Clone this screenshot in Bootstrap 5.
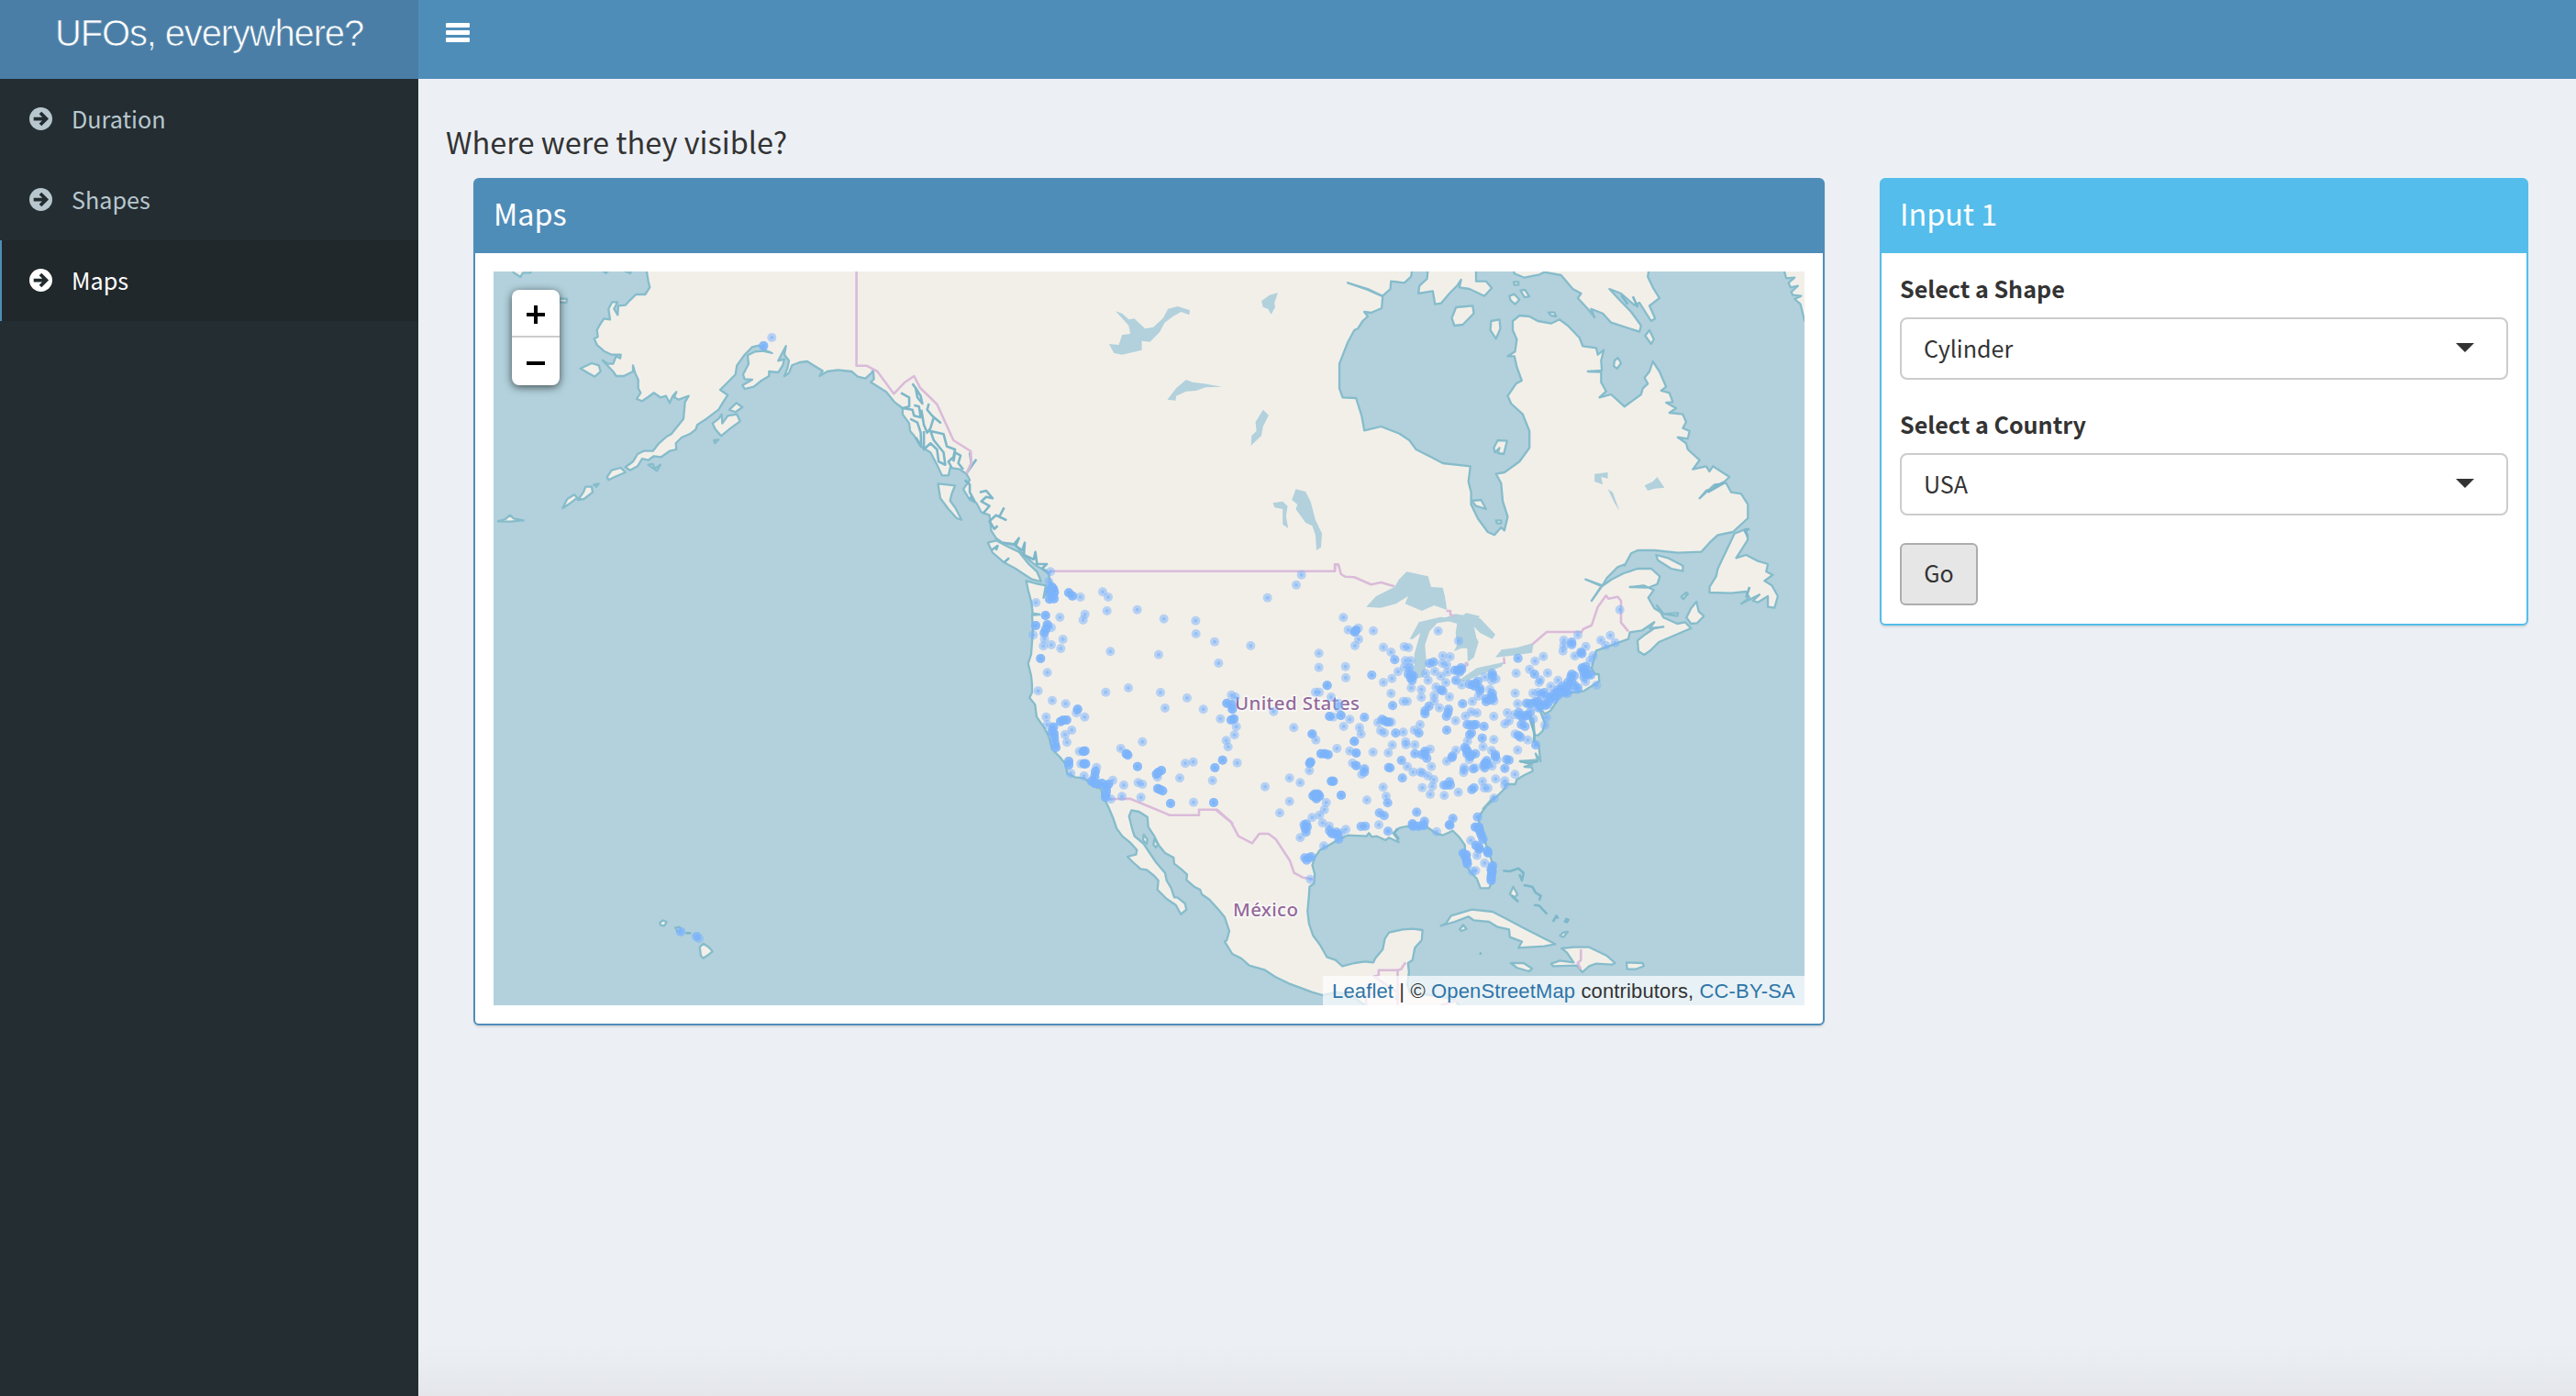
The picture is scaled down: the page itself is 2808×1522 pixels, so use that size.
<!DOCTYPE html>
<html lang="en">
<head>
<meta charset="utf-8">
<title>UFOs, everywhere?</title>
<link rel="stylesheet" href="https://cdn.jsdelivr.net/npm/bootstrap@5.3.0/dist/css/bootstrap.min.css">
<script src="https://cdn.jsdelivr.net/npm/bootstrap@5.3.0/dist/js/bootstrap.bundle.min.js"></script>
<style>
body{background:#ecf0f5;color:#333;font-family:"Noto Sans CJK SC","Noto Sans",sans-serif;font-size:25.1px;line-height:40px;height:1522px;overflow:hidden}
.topbar{height:86px;background:#4f8db9}
.brand{width:456px;height:86px;background:#4a7ea6;color:#fff;font:40px/72px "Liberation Sans",sans-serif;letter-spacing:-1.15px;-webkit-text-stroke:.7px #4a7ea6}
.burger{margin-left:30px;margin-top:24px}
.side{width:456px;background:#242d32;height:1436px}
.side .nav-link{height:88px;padding:0 0 2px 30px;color:#b8c7ce;border-left:2px solid transparent;font-size:25.2px}
.side .nav-link svg{width:25px;height:25px;margin-right:21px}
.side .nav-link.active{background:#20282b;color:#fff;border-left-color:#4f8db9}
.content-area{padding:48px 0 0 30px;background:linear-gradient(#e4e7eb00 96%,#e4e6ea)}
.heading{font-size:32.5px;font-weight:400;line-height:40px;margin:0 0 20px}
.panel{border:2px solid #4f8db9;border-radius:6px;box-shadow:0 2px 2px rgba(0,0,0,.1);background:#fff}
.panel-map{width:1473px;height:924px;margin-left:30px}
.panel-in{width:707px;height:488px;margin-left:60px;border-color:#54bdeb}
.panel-top{height:80px;background:#4f8db9;color:#fff;font-size:32.3px;line-height:73px;padding-left:20px}
.panel-in .panel-top{background:#54bdeb}
.panel-fields{padding:20px}
.mapbox{width:1429px;height:800px;margin:20px;background:#b2d1dc;overflow:hidden}
.mapbox>svg{display:block}
.zoomer{left:20px;top:20px;width:52px;height:104px;background:#fff;border-radius:8px;box-shadow:0 2px 10px rgba(0,0,0,.65)}
.zoomer div{height:52px}
.zoomer div:first-child{border-bottom:2px solid #ccc;padding-top:4px}
.credit{right:0;bottom:0;height:32px;width:525px;background:rgba(255,255,255,.7);font:22px/33px "Liberation Sans",sans-serif;letter-spacing:.14px;white-space:nowrap;padding-left:10px}
.credit a{color:#2e75a8;text-decoration:none}
.field-label{font-weight:700;line-height:37px;display:block;margin-bottom:13px}
.pick{height:68px;border:2px solid #ccc;border-radius:8px;padding:0 35px 2px 24px;margin-bottom:30px;background:#fff}
.tri{border:10px solid transparent;border-top-color:#333;border-bottom:0}
.go{width:85px;height:68px;border:2px solid #adadad;border-radius:6px;background:#e6e6e6;color:#333;font-size:25px;padding:0 0 2px}
</style>
</head>
<body>
<header class="topbar d-flex">
  <div class="brand text-center">UFOs, everywhere?</div>
  <svg class="burger" width="27" height="24" fill="#fff"><rect y="1" width="26" height="5" rx="1"/><rect y="9" width="26" height="5" rx="1"/><rect y="17" width="26" height="5" rx="1"/></svg>
</header>
<div class="d-flex">
  <nav class="side nav flex-column flex-shrink-0">
    <a class="nav-link d-flex align-items-center"><svg viewBox="0 0 24 24"><use href="#arrow"/></svg>Duration</a>
    <a class="nav-link d-flex align-items-center"><svg viewBox="0 0 24 24"><use href="#arrow"/></svg>Shapes</a>
    <a class="nav-link d-flex align-items-center active"><svg viewBox="0 0 24 24"><use href="#arrow"/></svg>Maps</a>
  </nav>
  <main class="content-area flex-grow-1">
    <h3 class="heading">Where were they visible?</h3>
    <div class="d-flex align-items-start">
      <section class="panel panel-map">
        <div class="panel-top">Maps</div>
        <div class="mapbox position-relative">
          <svg id="map" width="1429" height="800" viewBox="538 296 1429 800"></svg>
          <div class="zoomer position-absolute">
            <div class="d-flex align-items-center justify-content-center"><svg width="22" height="22" stroke="#000" stroke-width="4"><path d="M1 11H21M11 1V21"/></svg></div>
            <div class="d-flex align-items-center justify-content-center"><svg width="22" height="22" stroke="#000" stroke-width="4"><path d="M1 13H21"/></svg></div>
          </div>
          <div class="credit position-absolute"><a href="#">Leaflet</a> | © <a href="#">OpenStreetMap</a> contributors, <a href="#">CC-BY-SA</a></div>
        </div>
      </section>
      <section class="panel panel-in">
        <div class="panel-top">Input 1</div>
        <div class="panel-fields">
          <label class="field-label">Select a Shape</label>
          <div class="pick d-flex align-items-center justify-content-between"><span>Cylinder</span><span class="tri"></span></div>
          <label class="field-label">Select a Country</label>
          <div class="pick d-flex align-items-center justify-content-between"><span>USA</span><span class="tri"></span></div>
          <button class="btn go">Go</button>
        </div>
      </section>
    </div>
  </main>
</div>
<svg width="0" height="0" class="position-absolute"><defs><g id="arrow"><circle cx="12" cy="12" r="12" fill="currentColor"/><path d="M4.5 12H17M11.5 5.8 17.7 12l-6.2 6.2" fill="none" stroke="#222b2f" stroke-width="3.6"/></g></defs></svg>
<script>
// Every sheet of the chart has its own origin and scale: [x, y, sx, sy]
const S={A:[530,290,1/3,1/3],B:[900,290,1/2.8,1/3],C:[1400,290,.3635,1/3],D:[1080,600,1/3,1/3],
E:[1480,600,1/3,1/3],F:[1080,860,1/3,1/3],G:[1420,860,.3763,1/3],H:[700,980,1/3,1/3]};
const map=document.getElementById('map');
const pts=(k,s)=>{const n=s.trim().split(/[\s,]+/).map(Number),t=S[k],o=[];for(let i=0;i<n.length;i+=2)o.push([t[0]+n[i]*t[2],t[1]+n[i+1]*t[3]]);return o};
const el=(name,a,text)=>{const e=document.createElementNS('http://www.w3.org/2000/svg',name);for(const k in a)e.setAttribute(k,a[k]);if(text)e.textContent=text;map.appendChild(e)};
const path=(list,closed,attrs)=>{const p=list.flatMap(([k,s])=>pts(k,s));el('path',{d:'M'+p.map(q=>q[0].toFixed(1)+' '+q[1].toFixed(1)).join('L')+(closed?'Z':''),...attrs})};
const LAND={fill:'#f2efe9',stroke:'#86bccb','stroke-width':2.3,'stroke-linejoin':'round'};
const LAKE={fill:'#b2d1dc'};
const COAST={fill:'none',stroke:'#7db7c9','stroke-width':2.6,'stroke-linejoin':'round'};
const BORDER={fill:'none',stroke:'#dabbd9','stroke-width':2.6,'stroke-linejoin':'round'};

// North American mainland, west coast first, then back up the Atlantic side
path([['A','525,0 525,18 530,50 535,70 520,93 490,93 470,112 455,128 432,130 430,160 418,140 430,118 412,118 400,140 405,175 385,172 370,195 362,210 365,232 353,238 362,258 385,278 410,290 440,290 438,302 425,295 415,320 398,320 380,308 415,345 425,360 450,360 480,345 480,325 487,350 497,372 497,400 505,415 492,435 510,442 530,428 548,415 570,430 588,425 600,448 610,425 622,412 615,430 630,437 662,425 650,445 645,500 625,525 605,550 590,558 565,580 545,605 515,605 495,615 480,640 455,658 470,668 495,655 510,630 530,635 548,622 572,625 600,605 622,600 620,580 640,560 665,550 685,535 690,520 720,500 760,470 775,445 790,422 765,405 790,380 815,355 820,325 845,290 870,265 892,260 912,275 935,285 905,278 880,280 855,292 858,320 840,355 845,370 870,372 838,390 845,402 875,395 900,375 925,360 925,345 955,348 970,325 975,305 955,310 965,290 980,262 975,290 990,310 985,335 975,360 990,350 1000,325 1025,315 1050,312 1070,325 1100,343 1090,360 1115,345 1150,340 1195,345 1215,362 1240,368 1260,350 1265,340 1268,370 1258,380'],
['B','185,412 210,445 235,465 235,485 255,515 258,540 270,555 290,590 320,610 340,650 355,685 375,685 380,660 410,665 430,680 440,700 430,715 420,730 440,765 460,775 475,805 500,815 505,865 520,890 540,905 580,912 600,940 625,965 650,985 672,995 682,1005 682,1020 690,1040 665,1085 672,1045 640,1038 612,1030 618,1060 628,1100 632,1135'],
['D','135,205 160,210 135,212 138,260 135,300 132,340 122,370 132,410 135,440 135,465 127,482 145,505 150,545 175,580 190,610 200,650 225,675 245,700 250,730 275,742 305,745 330,765 360,780 370,810'],
['F','385,60 400,95 412,130 430,155 455,175 478,200 475,215 447,222 465,240 490,262 510,265 535,285 548,300 545,330 575,360 605,380 622,410 640,395 635,375 610,355 600,355 590,325 575,300 570,275 540,240 520,210 500,180 470,155 462,130 452,90 460,70 485,75 512,92 515,125 535,155 550,185 570,210 598,225 600,245 622,262 642,280 640,298 665,320 685,330 690,345 715,362 745,395 765,420 780,465 772,495 765,500 790,540 820,555 845,578 895,592 930,615 975,637 1010,650 1050,665 1085,675'],
['G','100,665 140,675 185,712 455,712 440,690 400,680 350,672 310,665 303,640 308,600 305,570 318,560 325,520 345,495 347,462 320,458 290,460 250,470 238,490 232,525 210,555 205,568 180,565 150,570 115,580 95,560 70,550 50,510 30,480 18,440 14,400 18,350 20,320 33,310 35,280 28,250 35,225 50,200 75,185 105,165 130,152 185,155 192,145 200,157 215,155 240,168 250,160 278,175 272,160 262,145 280,128 300,123 360,125 385,145 405,152 435,137 455,160 470,185 470,215 468,240 485,270 505,295 515,325 540,325 550,300 552,250 540,210 525,165 515,125 508,95 520,75 540,45 555,25'],
['E','410,845 440,820 480,780 485,765 515,765 520,750 545,735 572,722 570,710 545,708 570,700 530,690 588,685 582,665 598,690 592,640 580,625 575,590 565,560 560,530 575,560 578,605 590,605 605,590 612,565 600,535 590,510 612,535 630,525 650,495 655,480 700,465 740,460 790,428 788,405 775,405 765,385 775,345 780,328 830,310 885,290 890,268 930,262 970,235 955,255 1000,250 970,255 940,275 915,295 918,330 937,342 960,325 985,300 1090,255 1070,235 1045,240 1000,220 978,180 1000,208 1048,205 1045,215 1000,208 970,190 950,155 968,130 935,115 890,120 950,122 980,110 988,85 960,60 915,60 870,75 830,95 795,120 775,150 765,165 798,118 745,95 800,115 815,90 850,55 875,45'],
['C','1020,980 1040,940 1060,930 1110,930 1180,938 1250,935 1275,905 1300,880 1345,870 1390,825 1390,780 1370,745 1340,740 1325,710 1290,715 1245,760 1265,735 1320,705 1335,690 1300,665 1285,655 1275,672 1265,655 1225,665 1245,635 1210,600 1205,580 1180,560 1210,565 1215,540 1195,530 1205,510 1195,485 1155,480 1175,465 1145,447 1165,445 1155,415 1130,408 1145,395 1125,345 1105,312 1095,345 1080,365 1090,385 1075,400 1070,420 1045,440 1020,460 1000,440 980,420 945,430 965,410 950,380 950,347 910,345 952,342 950,310 958,275 940,290 935,268 895,262 885,235 850,195 825,175 800,188 760,180 735,165 705,162 685,180 685,210 697,240 692,280 670,295 690,295 697,330 712,375 695,385 670,425 680,450 715,485 735,540 735,595 705,640 660,675 635,680 650,710 655,770 670,820 660,865 650,855 630,880 610,870 580,825 560,780 560,740 552,705 558,655 475,645 440,625 395,600 375,570 345,548 290,525 240,538 232,490 215,432 175,430 165,400 165,320 190,250 210,210 220,205 235,180 250,165 240,150 260,153 292,138 295,100 250,78 190,55 250,75 295,98 318,75 320,50 360,55 380,35 385,0']],true,LAND);

// Islands
[['A','78,0 90,22 112,36 120,22 145,22 150,0'],['A','370,10 392,23 405,10'],['A','440,10 470,24 480,10'],
['A','240,106 265,108 262,120 240,118'],['A','308,335 345,318 368,325 374,345 355,362 330,348'],
['A','795,470 818,448 838,462 815,478'],['A','740,515 760,500 770,485 772,515 790,490 820,485 830,508 800,530 768,556 750,535'],['A','745,570 760,568 748,580'],
['A','395,690 410,668 440,660 455,675 420,690 400,700'],['A','250,792 265,762 288,748 298,758 272,778'],['A','300,765 318,740 325,722 345,722 348,740 320,762'],['A','352,715 368,712 360,722'],['A','38,835 62,828 78,815 90,826 122,832 80,836'],['A','530,650 545,648 552,662 570,650 558,670'],
['B','343,712 370,715 395,718 385,745 380,768 395,790 415,830 400,825 375,795 350,760'],
['B','495,905 520,898 560,920 590,935 620,975 645,1000 658,1032 630,1025 605,1008 580,990 545,970 510,938'],
['C','400,0 430,18 428,42 405,65 402,90 445,82 452,125 470,122 495,90 520,62 530,45 525,70 555,75 600,98 622,72 605,50 575,50 575,0'],
['C','685,0 690,25 720,38 765,28 780,20 830,30 865,75 890,90 880,105 910,140 930,168 920,140 955,155 980,185 1065,215 1070,195 1040,150 1000,105 975,75 1010,90 1050,128 1065,120 1100,180 1112,172 1095,130 1125,105 1105,70 1090,35 1095,0'],
['C','515,135 565,130 568,155 535,192 510,195 502,170'],['C','620,180 645,175 648,205 635,238 618,210'],['C','675,98 690,92 705,110 692,125 678,112'],['C','708,80 722,78 735,100 720,102'],['C','688,52 702,52 702,62 690,62'],['C','792,152 810,152 815,165 800,162'],['C','990,310 1000,300 1010,318 998,335 988,328'],['C','1082,228 1095,210 1108,240 1100,255'],
['C','628,595 640,570 668,572 658,615 640,612 645,595 632,610'],['C','562,768 590,765 605,795 575,785'],['C','635,832 650,832 650,842 638,842'],
['C','1495,0 1505,40 1530,38 1512,55 1518,70 1540,65 1520,85 1525,95 1550,98 1530,108 1548,125 1560,180 1590,200 1590,0'],
['C','1350,875 1385,860 1390,895 1370,930 1355,955 1385,945 1420,965 1450,975 1445,1000 1465,1010 1440,1030 1462,1045 1480,1080 1470,1118 1450,1115 1450,1080 1420,1100 1405,1095 1425,1075 1370,1105 1395,1085 1385,1065 1340,1070 1275,1068 1275,1050 1295,1015 1300,990'],
['C','1115,945 1150,955 1195,980 1195,998 1160,990 1120,962'],['E','1075,220 1090,190 1108,168 1115,200 1132,215 1110,238 1090,240'],['E','1058,152 1075,138 1080,142 1065,160'],
['F','500,150 512,165 510,180 498,168'],['F','535,165 547,182 540,192 532,182'],
['G','400,448 415,440 430,415 490,395 550,402 590,425 640,455 700,490 732,508 700,515 625,520 635,500 600,485 598,460 565,452 540,435 495,430 480,418 440,435'],['G','455,460 465,445 475,458 460,465'],
['G','603,570 640,570 665,588 655,597 620,585'],['G','720,572 745,562 785,568 765,535 750,522 785,518 830,518 880,545 905,570 895,575 850,572 830,580 810,600 795,578 725,580'],['G','938,568 985,570 988,580 965,590 940,590'],['G','600,345 610,320 622,345 615,355'],['G','745,480 755,470 768,468 755,485'],
['H','188,158 200,146 218,158 230,172 215,184 200,194 192,186'],['H','58,78 68,70 80,76 72,88 60,86'],['H','108,94 122,92 128,104 116,106']
].forEach(i=>path([i],true,LAND));

// Fjords and narrow channels
[['B','230,415 255,430 255,460 235,465 265,470 270,490 290,495 285,460 270,455'],['B','265,385 275,400 280,430 295,450 290,425 275,400'],['B','315,450 310,470 325,490 350,512 330,495 320,530 310,545 300,520 292,470'],['B','258,500 280,512 290,545 292,590 275,560'],['B','300,540 300,600 320,580 340,600 345,640 365,650 360,610 330,570 320,540 360,550 370,590 395,600 390,625 375,640 385,660'],
['B','390,640 395,610 412,620 405,645 420,665'],['B','440,610 445,645 432,675 460,632'],['B','425,700 440,715 440,740 455,770 440,755'],['B','470,740 490,735 510,760 490,755 475,770 500,785 480,810'],['B','545,790 530,820 550,830 520,815 500,835 515,860 525,850'],['B','540,905 575,910 590,890 580,915 600,930 608,905 605,945 635,960 640,935 645,975 675,975 660,990 680,1005'],['B','505,930 525,915 520,930'],['B','545,970 560,955'],
['C','1395,860 1380,865 1390,885'],['C','1010,95 1030,125'],['C','1045,100 1060,135'],['C','1385,1085 1395,1050'],['C','1290,720 1315,712 1270,740'],
['E','560,530 570,570 578,600 575,630'],['E','530,690 560,695 590,690'],['F','1330,130 1320,145 1335,165'],['G','580,268 600,270 625,260 640,275 635,300 628,280'],['G','640,315 665,320 675,340 690,350 685,365'],['G','670,380 685,382 708,410'],['G','725,435 735,415 740,425'],['G','760,425 770,428 765,436 757,432'],['G','605,350 625,370'],['G','512,538 518,540'],['H','142,112 160,112']
].forEach(i=>path([i],false,COAST));

// Lakes
[['B','885,148 905,155 925,175 942,172 975,205 1000,200 1030,170 1045,140 1075,132 1112,145 1110,160 1085,150 1060,165 1035,185 1020,215 990,248 965,245 965,275 905,290 880,285 865,255 895,258 905,225 930,222 925,195'],
['B','1330,115 1355,95 1380,88 1370,120 1372,135 1360,158 1350,140 1335,135'],['B','1043,437 1070,400 1100,372 1120,380 1155,385 1210,395 1160,397 1130,408 1100,410 1070,425 1068,440'],['B','1335,470 1352,488 1335,525 1330,555 1298,588 1300,555 1315,540 1312,510'],
['B','1435,730 1465,738 1480,770 1495,830 1515,875 1512,920 1498,930 1495,880 1485,850 1465,840 1435,795 1440,780 1423,765'],['B','1365,775 1395,770 1410,785 1405,820 1412,858 1395,845 1395,795 1370,790'],
['C','930,680 970,675 970,695 950,690 955,715 930,705'],['C','970,730 985,740 1005,800 990,775'],['C','1080,718 1105,705 1118,690 1140,725 1110,728 1090,735'],
['E','28,185 60,150 120,120 135,95 160,70 230,85 240,120 278,122 285,150 292,195 250,180 210,198 180,185 155,175 165,150 125,175 75,188'],
['E','170,290 200,235 270,218 310,222 300,232 260,238 235,265 220,310 225,370 215,415 185,420 185,340 205,270 180,290'],
['E','272,225 320,208 400,222 450,275 440,290 400,270 380,250 388,285 395,300 380,350 360,365 358,320 340,320 315,330 325,310 320,270 325,240'],
['E','330,425 390,385 480,365 470,380 400,408 350,430'],['E','450,350 470,325 520,318 575,303 570,335 500,345'],['E','350,365 365,372 358,382 348,378'],['E','355,205 400,215 385,230 340,215']
].forEach(i=>path([i],true,LAKE));

// National borders
[['B','94,0 94,326 125,326 158,345 208,418 240,382 270,360 288,398 340,452 390,570 443,606 445,645 430,678'],['B','682,998 1554,998 1554,976 1563,976 1568,985'],['C','152,998 152,976 162,976 170,1008 182,1016 210,1018 260,1042 290,1035 330,1048'],
['E','290,198 303,198 303,210 315,215'],['E','358,365 352,380'],['E','478,350 480,372'],['E','570,308 618,267 732,267 738,257 765,245 785,185 812,148 820,158 850,152 861,165 861,236 885,265'],
['D','385,814 455,812 585,866 681,866 681,848 740,848 792,895'],['F','735,68 785,108 810,155 855,178 878,147 908,147 932,165 978,235 992,275 1020,290 1058,296'],
['G','205,615 220,610 220,593 275,593 285,590 298,568'],['G','275,593 275,712'],['G','205,612 240,640 275,665 270,690'],['G','185,710 182,680 210,665'],['G','400,708 455,690'],['G','806,525 806,560 797,570 806,590']
].forEach(i=>path([i],false,BORDER));

const LBL={'font-family':'Noto Sans','font-size':20.5,'font-weight':500,fill:'#94699a',stroke:'#fff','stroke-opacity':.7,'stroke-width':3,'paint-order':'stroke'};
el('text',{x:1346,y:774,textLength:136,...LBL},'United States');
el('text',{x:1344,y:999,textLength:71,...LBL},'México');

// Sightings: single reports, then spots where many reports overlap
const dot=(x,y)=>{el('circle',{cx:x,cy:y,r:5,fill:'#7bb4fc','fill-opacity':.5});el('circle',{cx:x,cy:y,r:2,fill:'#7bb4fc','fill-opacity':.6})};
const ONE={A:'934,234',H:'186,130',
D:'195,70 190,103 1016,80 999,113 905,155 366,136 384,153 293,153 148,171 308,209 302,228 380,198 479,194 226,219 566,224 670,230 671,273 732,299 850,312 745,369 549,341 391,331 236,291 229,321 198,309 172,313 176,290 139,277 198,253 185,400 155,460 201,491 245,502 181,545 307,545 280,532 376,464 450,450 555,465 570,516 642,483 695,520 751,551 787,473 800,480 803,577 797,604 770,622 776,643 806,695 991,580 925,527 725,753 662,692 636,697 618,745 663,824 496,626 425,648 265,588 243,603 249,628 290,658 295,698 435,768 482,760 496,765 491,808 429,805 262,730 305,738 399,752 393,814 346,710 1153,220 1169,260 1191,312 1073,337 1073,383 1160,380 1161,417 1062,464 1074,464 1113,480 1137,500 1137,515 1174,553 1154,576 1120,545 1063,620 1132,648 1174,656 1183,696 1042,721 1012,760 977,745 897,773 977,821 945,859 185,570 1097,825 545,742',
E:'51,263 2,254 3,291 84,317 109,333 132,397 112,419 84,432 109,468 6,580 11,601 50,660 100,662 113,637 13,733 30,817 83,775 93,804 86,868 193,857 263,264 330,296 152,315 166,318 156,361 173,361 153,382 278,345 302,348 277,370 291,375 252,396 222,403 293,398 230,425 272,412 288,433 256,447 250,475 208,455 208,481 175,450 250,493 267,515 300,479 149,494 162,494 340,440 375,494 395,477 320,557 352,542 371,529 390,532 445,543 515,467 518,402 562,389 580,362 607,347 621,401 593,432 597,424 674,294 671,329 674,313 720,277 746,314 710,346 795,294 811,311 826,278 842,302 857,194 781,441 416,415 432,455 452,421 438,426 573,467 523,502 489,531 495,558 481,568 513,538 515,601 556,620 523,653 445,619 410,643 451,748 514,733 481,754 481,768 446,811 391,872 408,756 329,791 283,802 237,798 244,772 211,776 249,750 230,738 241,707 181,725 205,725 212,728 162,707 187,636 158,636 157,626 149,595 185,588 204,570 87,597 75,590 66,563 237,650 321,654 291,690 359,624 346,727 348,710 348,718 384,712 439,706 426,778 414,778 311,877 218,886 612,572 617,547 574,552 438,655 655,425 631,445 733,385 770,345 760,360 110,562 718,455 745,430 590,465 445,493 365,685 455,685',
F:'1051,94 1075,86 1091,68 1085,112 1107,122 1161,133 1012,160 1089,187 1045,296 1269,118 1287,88 1145,145',
G:'330,76 353,107 435,97 507,92 487,169 505,218 527,243 388,140 501,268 492,270 427,121'};
const MANY={A:'907,261',H:'126,107 178,123',
D:'255,139 267,149 200,120 205,127 208,137 195,130 195,142 203,148 192,160 207,158 179,213 147,246 185,243 175,270 180,258 163,354 284,520 228,560 236,556 248,555 205,578 200,593 207,600 208,615 210,632 213,645 255,690 255,702 305,698 310,698 303,658 308,656 342,724 340,740 330,755 340,762 350,765 363,762 378,775 376,800 375,808 378,788 385,765 443,665 448,670 480,707 542,732 548,726 558,720 546,779 553,782 562,787 588,828 729,825 733,711 758,686 788,505 790,520 772,500 795,551 786,555 1100,442 1190,267 1194,262 1145,540 1108,543 1051,601 1189,625 1080,665 1092,665 1103,668 1195,663 1195,704 1046,692 1043,697 1114,755 1120,755 1054,803 1060,797 1070,797 1075,804 1065,812 1062,803 1146,801',
E:'46,408 121,358 170,385 165,405 175,405 182,412 173,418 178,425 114,508 22,546 88,558 95,562 102,562 80,553 124,598 200,598 143,687 101,710 106,712 146,745 22,715 22,725 71,859 98,826 235,370 248,365 233,510 220,525 220,535 272,457 278,460 321,425 318,392 327,392 338,384 340,390 333,398 343,502 297,520 295,532 290,543 440,403 440,410 524,353 578,405 365,438 375,440 385,435 393,428 383,445 400,452 400,460 440,468 437,478 442,483 420,485 420,495 435,490 291,588 358,570 368,571 380,571 386,570 413,576 372,597 366,603 407,614 350,645 355,650 360,658 357,665 385,665 372,670 367,675 187,665 210,668 220,657 220,665 226,680 308,678 310,673 412,703 422,688 417,695 415,712 425,700 450,668 450,675 487,684 495,686 481,713 378,715 282,768 292,768 303,768 300,757 373,783 380,777 582,637 525,605 532,611 535,570 547,576 548,540 555,540 565,528 540,548 530,540 527,530 552,500 562,502 575,500 590,495 600,502 597,510 612,508 620,505 610,465 600,470 620,480 640,470 635,480 650,465 655,455 655,475 665,455 670,445 675,465 685,468 690,455 685,445 687,432 700,430 708,440 700,405 697,415 708,410 643,487 625,495 720,450 735,385 745,380 750,390 738,397 745,405 755,405 762,408 740,415 730,333 733,338 700,300 700,308 582,495 592,515',
F:'1025,118 1032,115 1035,125 1028,130 1031,142 1115,146 1121,147 1130,142 1134,150 1138,165 1108,137 1027,226 1048,222 1033,233 1042,226 1299,139 1225,122 1211,123',
G:'318,115 320,122 335,122 350,120 425,118 500,125 510,125 513,137 517,150 522,165 511,192 511,197 502,185 465,211 474,216 472,225 476,236 477,245 535,203 537,210 550,252 546,263 549,270 547,280 546,290 546,300'};
for(const k in ONE)pts(k,ONE[k]).forEach(p=>dot(...p));
for(const k in MANY)pts(k,MANY[k]).forEach(p=>{dot(...p);dot(...p);if(k=='A'||k=='G'||k=='D')dot(...p)});
</script>
</body>
</html>
